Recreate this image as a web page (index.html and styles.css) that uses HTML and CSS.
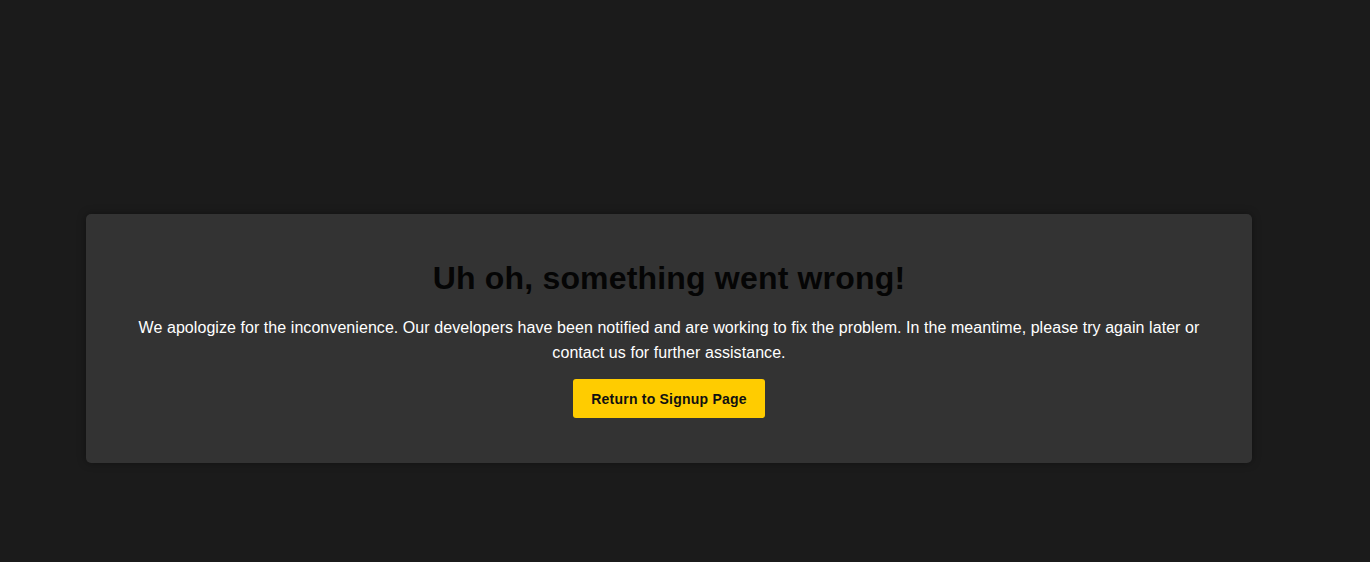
FILE: index.html
```html
<!DOCTYPE html>
<html lang="en">
<head>
<meta charset="utf-8">
<title>Error</title>
<link rel="stylesheet" href="styles.css">
</head>
<body>
<main class="page">
  <section class="card">
    <h1 class="title">Uh oh, something went wrong!</h1>
    <p class="message">We apologize for the inconvenience. Our developers have been notified and are working to fix the problem. In the meantime, please try again later or contact us for further assistance.</p>
    <a class="button" href="#">Return to Signup Page</a>
  </section>
</main>
</body>
</html>
```
FILE: styles.css
```css
html, body {
  margin: 0;
  padding: 0;
  background: #1b1b1b;
  height: 100%;
}
body {
  font-family: "Liberation Sans", Arial, sans-serif;
}
.page {
  display: flex;
  padding: 214px 118px 0 86px;
}
.card {
  flex: 1;
  background: #333333;
  border-radius: 5px;
  box-shadow: 0 0 8px rgba(0, 0, 0, 0.35);
  padding: 46px 50px 45px;
  display: flex;
  flex-direction: column;
  align-items: center;
  text-align: center;
}
.title {
  margin: 0 0 18px;
  font-size: 32px;
  line-height: 37px;
  font-weight: bold;
  letter-spacing: 0.18px;
  color: #050505;
}
.message {
  margin: 0 0 14px;
  font-size: 16px;
  line-height: 25px;
  letter-spacing: 0.06px;
  color: #ffffff;
}
.button {
  display: block;
  background: #ffcc00;
  color: #111;
  font-size: 14px;
  font-weight: bold;
  letter-spacing: 0.22px;
  line-height: 16px;
  padding: 12px 18px 11px;
  border-radius: 3px;
  text-decoration: none;
}
```
